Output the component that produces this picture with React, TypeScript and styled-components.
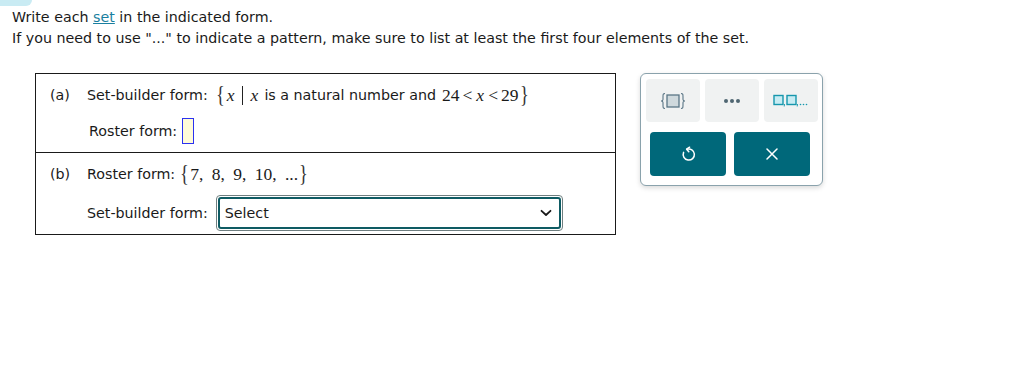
import React from "react";
import styled, { createGlobalStyle } from "styled-components";

const Global = createGlobalStyle`
  html, body { margin: 0; padding: 0; background: #fff; }
  body { font-family: "DejaVu Sans", Verdana, sans-serif; font-size: 14.25px; color: #1a1a1a; }
`;

const Page = styled.div`
  position: relative;
  width: 1026px;
  height: 378px;
  padding: 7px 0 0 12px;
  box-sizing: border-box;
`;

const Blob = styled.div`
  position: absolute;
  left: 0;
  top: 0;
  width: 32px;
  height: 6px;
  background: #c9ebf3;
  border-bottom-right-radius: 8px;
`;

const Instr = styled.p`
  margin: 0;
  line-height: 20.5px;
`;

const Link = styled.a`
  color: #1a7fa0;
  text-decoration: underline;
`;

const Main = styled.div`
  display: flex;
  align-items: flex-start;
  margin-top: 25px;
  padding-left: 23px;
  gap: 24px;
`;

const Table = styled.div`
  width: 579px;
  border: 1px solid #1a1a1a;
  display: flex;
  flex-direction: column;
`;

const Row = styled.div<{ $last?: boolean }>`
  display: grid;
  grid-template-columns: 37px 1fr;
  height: ${p => (p.$last ? "81px" : "79px")};
  box-sizing: border-box;
  padding: 8px 0 0 14px;
  border-bottom: ${p => (p.$last ? "none" : "1px solid #1a1a1a")};
`;

const Tag = styled.span`
  line-height: 26px;
`;

const Line = styled.div<{ $h: number; $indent?: number }>`
  display: flex;
  align-items: center;
  height: ${p => p.$h}px;
  padding-left: ${p => p.$indent ?? 0}px;
  white-space: nowrap;
`;

const Math = styled.span<{ $wide?: boolean; $gap?: number }>`
  font-family: "Liberation Serif", "Times New Roman", serif;
  font-size: 17.5px;
  display: inline-flex;
  align-items: center;
  margin-left: ${p => p.$gap ?? 7}px;
  word-spacing: ${p => (p.$wide ? "4px" : "0")};
  white-space: pre;
`;

const Brace = styled.span`
  font-family: "Liberation Serif", "Times New Roman", serif;
  font-size: 23px;
  line-height: 1;
  transform: scaleX(0.8) translateY(-1px);
  display: inline-block;
  color: #333;
`;

const Var = styled.i`
  font-style: italic;
  margin: 0 1px;
`;

const Bar = styled.span`
  display: inline-block;
  width: 1px;
  height: 19px;
  background: #222;
  margin: 0 7px 0 6px;
`;

const Words = styled.span`
  font-family: "DejaVu Sans", Verdana, sans-serif;
  font-size: 14.25px;
  margin: 0 6px 0 5px;
`;

const Op = styled.span`
  margin: 0 3px;
`;

const Input = styled.span`
  display: inline-block;
  width: 10px;
  height: 24px;
  border: 1px solid #2b32f0;
  background: #fffbd8;
  margin-left: 5px;
`;

const SelectOuter = styled.div`
  margin-left: 8px;
  width: 347px;
  height: 36px;
  flex: none;
  box-sizing: border-box;
  border: 1px solid #6f7f80;
  border-radius: 4px;
  padding: 1px;
`;

const SelectInner = styled.div`
  height: 100%;
  box-sizing: border-box;
  border: 2px solid #0e5b63;
  border-radius: 3px;
  display: flex;
  align-items: center;
  justify-content: space-between;
  padding: 0 7px 0 5px;
  color: #1a1a1a;
`;

const Panel = styled.div`
  width: 183px;
  height: 113px;
  box-sizing: border-box;
  border: 1px solid #8aa2ac;
  border-radius: 6px;
  box-shadow: 0 2px 5px rgba(0, 0, 0, 0.15);
  background: #fff;
  display: flex;
  flex-direction: column;
`;

const TopRow = styled.div`
  display: grid;
  grid-template-columns: repeat(3, 54px);
  gap: 5px;
  padding: 5px 0 0 5px;
`;

const ToolBtn = styled.div`
  height: 43px;
  background: #f0f2f2;
  border-radius: 4px;
  display: flex;
  align-items: center;
  justify-content: center;
`;

const BottomRow = styled.div`
  display: grid;
  grid-template-columns: repeat(2, 76px);
  gap: 8px;
  padding: 10px 0 0 9px;
`;

const ActBtn = styled.div`
  height: 44px;
  background: #00687a;
  border-radius: 4px;
  display: flex;
  align-items: center;
  justify-content: center;
`;

const Chevron = () => (
  <svg width="12" height="8" viewBox="0 0 12 8">
    <path d="M1.5 1.8 L6 6 L10.5 1.8" fill="none" stroke="#1a1a1a" strokeWidth="1.8" strokeLinecap="round" strokeLinejoin="round" />
  </svg>
);

const BraceBoxIcon = () => (
  <svg width="26" height="18" viewBox="0 0 26 18">
    <path d="M5 1.5 C3 1.5 3 2.5 3 5 L3 7.5 C3 8.5 2 9 1 9 C2 9 3 9.5 3 10.5 L3 13 C3 15.5 3 16.5 5 16.5" fill="none" stroke="#5a7686" strokeWidth="1.1" />
    <path d="M21 1.5 C23 1.5 23 2.5 23 5 L23 7.5 C23 8.5 24 9 25 9 C24 9 23 9.5 23 10.5 L23 13 C23 15.5 23 16.5 21 16.5" fill="none" stroke="#5a7686" strokeWidth="1.1" />
    <rect x="7" y="3" width="12" height="12" fill="#cfd9dd" stroke="#5a7686" strokeWidth="1.3" />
  </svg>
);

const DotsIcon = () => (
  <svg width="18" height="6" viewBox="0 0 18 6">
    <circle cx="3" cy="3" r="2" fill="#4f6672" />
    <circle cx="9" cy="3" r="2" fill="#4f6672" />
    <circle cx="15" cy="3" r="2" fill="#4f6672" />
  </svg>
);

const ListIcon = () => (
  <svg width="36" height="14" viewBox="0 0 36 14">
    <rect x="1" y="1.5" width="9" height="9" fill="#c7ecf3" stroke="#1697ad" strokeWidth="1.4" />
    <path d="M11.6 10 L11.2 12.5" stroke="#1697ad" strokeWidth="0.9" />
    <rect x="14" y="1.5" width="9" height="9" fill="#c7ecf3" stroke="#1697ad" strokeWidth="1.4" />
    <path d="M24.6 10 L24.2 12.5" stroke="#1697ad" strokeWidth="0.9" />
    <circle cx="27.5" cy="10.5" r="0.8" fill="#1697ad" />
    <circle cx="30.5" cy="10.5" r="0.8" fill="#1697ad" />
    <circle cx="33.5" cy="10.5" r="0.8" fill="#1697ad" />
  </svg>
);

const UndoIcon = () => (
  <svg width="15" height="16" viewBox="0 0 15 16">
    <path d="M6 3.2 A5.6 5.6 0 1 1 2.6 6.4" fill="none" stroke="#fff" strokeWidth="1.5" strokeLinecap="round" />
    <path d="M8.6 1.2 L5.6 3.2 L7.8 5.8" fill="none" stroke="#fff" strokeWidth="1.5" strokeLinecap="round" strokeLinejoin="round" />
  </svg>
);

const CloseIcon = () => (
  <svg width="12" height="12" viewBox="0 0 12 12">
    <path d="M1 1 L11 11 M11 1 L1 11" stroke="#fff" strokeWidth="1.5" strokeLinecap="round" />
  </svg>
);

export default function App() {
  return (
    <>
      <Global />
      <Page>
        <Blob />
        <Instr>
          Write each <Link>set</Link> in the indicated form.
        </Instr>
        <Instr>If you need to use "..." to indicate a pattern, make sure to list at least the first four elements of the set.</Instr>
        <Main>
          <Table>
            <Row>
              <Tag>(a)</Tag>
              <div>
                <Line $h={26}>
                  Set-builder form:
                  <Math>
                    <Brace>{"{"}</Brace>
                    <Var>x</Var>
                    <Bar />
                    <Var>x</Var>
                    <Words>is a natural number and</Words>
                    24<Op>&lt;</Op>
                    <Var>x</Var>
                    <Op>&lt;</Op>29
                    <Brace>{"}"}</Brace>
                  </Math>
                </Line>
                <Line $h={46} $indent={2}>
                  Roster form:
                  <Input />
                </Line>
              </div>
            </Row>
            <Row $last>
              <Tag>(b)</Tag>
              <div>
                <Line $h={26}>
                  Roster form:
                  <Math $wide $gap={4}>
                    <Brace>{"{"}</Brace>
                    {"7, 8, 9, 10, ..."}
                    <Brace>{"}"}</Brace>
                  </Math>
                </Line>
                <Line $h={52}>
                  Set-builder form:
                  <SelectOuter>
                    <SelectInner>
                      <span>Select</span>
                      <Chevron />
                    </SelectInner>
                  </SelectOuter>
                </Line>
              </div>
            </Row>
          </Table>
          <Panel>
            <TopRow>
              <ToolBtn><BraceBoxIcon /></ToolBtn>
              <ToolBtn><DotsIcon /></ToolBtn>
              <ToolBtn><ListIcon /></ToolBtn>
            </TopRow>
            <BottomRow>
              <ActBtn><UndoIcon /></ActBtn>
              <ActBtn><CloseIcon /></ActBtn>
            </BottomRow>
          </Panel>
        </Main>
      </Page>
    </>
  );
}
